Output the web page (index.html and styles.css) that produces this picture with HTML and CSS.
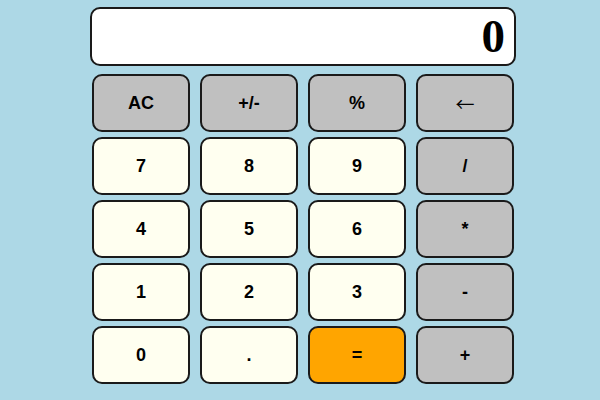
FILE: index.html
```html
<!DOCTYPE html>
<html>
<head>
<meta charset="utf-8">
<link rel="stylesheet" href="styles.css">
</head>
<body>
<div class="calc">
  <div class="display">0</div>
  <div class="keys">
    <button class="key op">AC</button>
    <button class="key op">+/-</button>
    <button class="key op">%</button>
    <button class="key op back">←</button>
    <button class="key num">7</button>
    <button class="key num">8</button>
    <button class="key num">9</button>
    <button class="key op">/</button>
    <button class="key num">4</button>
    <button class="key num">5</button>
    <button class="key num">6</button>
    <button class="key op">*</button>
    <button class="key num">1</button>
    <button class="key num">2</button>
    <button class="key num">3</button>
    <button class="key op">-</button>
    <button class="key num">0</button>
    <button class="key num">.</button>
    <button class="key eq">=</button>
    <button class="key op">+</button>
  </div>
</div>
</body>
</html>
```
FILE: styles.css
```css
html, body {
  margin: 0;
  padding: 0;
  background: #add8e6;
  width: 600px;
  height: 400px;
  overflow: hidden;
}
.calc {
  padding: 7px 0 0 90px;
  width: 426px;
}
.display {
  box-sizing: border-box;
  width: 426px;
  height: 59px;
  border: 2px solid #1a1a1a;
  border-radius: 10px;
  background: #ffffff;
  text-align: right;
  padding-right: 9px;
  font-family: "Liberation Serif", serif;
  font-weight: bold;
  font-size: 47px;
  line-height: 55px;
  color: #000;
}
.keys {
  display: grid;
  grid-template-columns: repeat(4, 98px);
  grid-auto-rows: 58px;
  column-gap: 10px;
  row-gap: 5px;
  margin: 8px 0 0 2px;
}
.key {
  box-sizing: border-box;
  border: 2px solid #1a1a1a;
  border-radius: 10px;
  font-family: "Liberation Sans", Arial, sans-serif;
  font-weight: bold;
  font-size: 18px;
  color: #000;
  padding: 0;
  margin: 0;
}
.back {
  font-family: "Noto Sans CJK JP", sans-serif;
  font-weight: normal;
  font-size: 19px;
}
.op { background: #c0c0c0; }
.num { background: #fffff0; }
.eq { background: #ffa500; }
```
